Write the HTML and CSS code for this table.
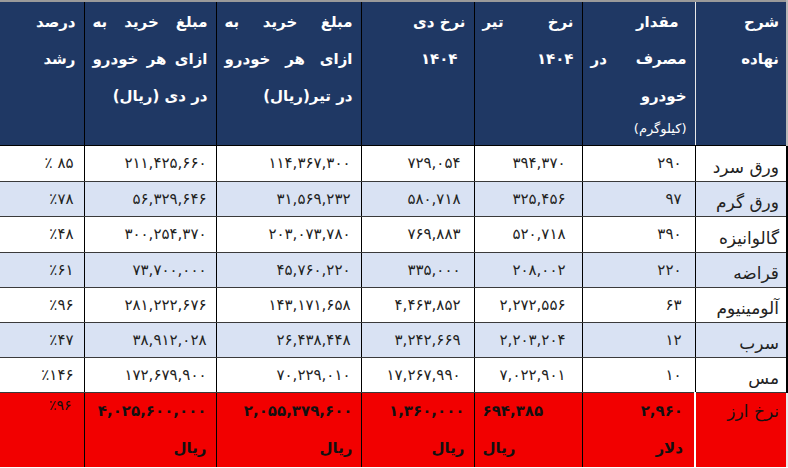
FILE: index.html
```html
<!DOCTYPE html>
<html lang="fa" dir="rtl">
<head>
<meta charset="utf-8">
<title>جدول نرخ مواد</title>
<link rel="stylesheet" href="styles.css">
</head>
<body>
<table class="grid">
  <colgroup>
    <col class="w1"><col class="w2"><col class="w3"><col class="w4"><col class="w5"><col class="w6"><col class="w7">
  </colgroup>
  <thead>
    <tr class="head">
      <th class="first"><span class="l">شرح</span><span class="l">نهاده</span></th>
      <th><span class="l ind">مقدار</span><span class="l j">مصرف در</span><span class="l">خودرو</span><span class="l small">(کیلوگرم)</span></th>
      <th><span class="l j">نرخ تیر</span><span class="l">۱۴۰۴</span></th>
      <th><span class="l">نرخ دی</span><span class="l ind">۱۴۰۴</span></th>
      <th><span class="l j">مبلغ خرید به</span><span class="l j">ازای هر خودرو</span><span class="l">در تیر(ریال)</span></th>
      <th><span class="l j">مبلغ خرید به</span><span class="l j">ازای هر خودرو</span><span class="l">در دی (ریال)</span></th>
      <th><span class="l">درصد</span><span class="l">رشد</span></th>
    </tr>
  </thead>
  <tbody>
    <tr class="r h36"><td class="first name">ورق سرد</td><td>۲۹۰</td><td>۳۹۴,۳۷۰</td><td>۷۲۹,۰۵۴</td><td>۱۱۴,۳۶۷,۳۰۰</td><td>۲۱۱,۴۲۵,۶۶۰</td><td>۸۵ ٪</td></tr>
    <tr class="r alt h35"><td class="first name">ورق گرم</td><td>۹۷</td><td>۳۲۵,۴۵۶</td><td>۵۸۰,۷۱۸</td><td>۳۱,۵۶۹,۲۳۲</td><td>۵۶,۳۲۹,۶۴۶</td><td>٪۷۸</td></tr>
    <tr class="r h36"><td class="first name">گالوانیزه</td><td>۳۹۰</td><td>۵۲۰,۷۱۸</td><td>۷۶۹,۸۸۳</td><td>۲۰۳,۰۷۳,۷۸۰</td><td>۳۰۰,۲۵۴,۳۷۰</td><td>٪۴۸</td></tr>
    <tr class="r alt h35"><td class="first name">قراضه</td><td>۲۲۰</td><td>۲۰۸,۰۰۲</td><td>۳۳۵,۰۰۰</td><td>۴۵,۷۶۰,۲۲۰</td><td>۷۳,۷۰۰,۰۰۰</td><td>٪۶۱</td></tr>
    <tr class="r h35"><td class="first name">آلومینیوم</td><td>۶۳</td><td>۲,۲۷۲,۵۵۶</td><td>۴,۴۶۳,۸۵۲</td><td>۱۴۳,۱۷۱,۶۵۸</td><td>۲۸۱,۲۲۲,۶۷۶</td><td>٪۹۶</td></tr>
    <tr class="r alt h35"><td class="first name">سرب</td><td>۱۲</td><td>۲,۲۰۳,۲۰۴</td><td>۳,۲۴۲,۶۶۹</td><td>۲۶,۴۳۸,۴۴۸</td><td>۳۸,۹۱۲,۰۲۸</td><td>٪۴۷</td></tr>
    <tr class="r h35"><td class="first name">مس</td><td>۱۰</td><td>۷,۰۲۲,۹۰۱</td><td>۱۷,۲۶۷,۹۹۰</td><td>۷۰,۲۲۹,۰۱۰</td><td>۱۷۲,۶۷۹,۹۰۰</td><td>٪۱۴۶</td></tr>
    <tr class="tot">
      <td class="first"><span class="l">نرخ ارز</span></td>
      <td><span class="l">۲,۹۶۰</span><span class="l">دلار</span></td>
      <td class="endal"><span class="l">۶۹۴,۳۸۵</span><span class="l">ریال</span></td>
      <td><span class="l">۱,۳۶۰,۰۰۰</span><span class="l">ریال</span></td>
      <td><span class="l">۲,۰۵۵,۳۷۹,۶۰۰</span><span class="l">ریال</span></td>
      <td><span class="l">۴,۰۲۵,۶۰۰,۰۰۰</span><span class="l">ریال</span></td>
      <td class="pct"><span class="l">٪۹۶</span></td>
    </tr>
  </tbody>
</table>
</body>
</html>
```

FILE: styles.css
```css
html, body {
  margin: 0;
  padding: 0;
  background: #ffffff;
}

body {
  font-family: "DejaVu Sans", sans-serif;
  color: #222222;
}

.grid {
  width: 788px;
  table-layout: fixed;
  border-collapse: collapse;
  border-top: 2px solid #9a9a9a;
}

.w1 { width: 92px; }
.w2 { width: 113px; }
.w3 { width: 108px; }
.w4 { width: 113px; }
.w5 { width: 145px; }
.w6 { width: 132px; }
.w7 { width: 85px; }

.l {
  display: block;
}

.j {
  text-align: justify;
  text-align-last: justify;
}

/* header */
.head th {
  box-sizing: border-box;
  height: 144px;
  background: #1f3864;
  color: #ffffff;
  font-weight: bold;
  font-size: 15px;
  line-height: 37px;
  text-align: right;
  vertical-align: top;
  padding: 2px 8px 0 8px;
  border-left: 1px solid #000000;
  border-bottom: 1px solid #000000;
  white-space: nowrap;
}

.head th.first {
  border-left: 1px solid #e8e8e8;
  border-right: 2px solid #b8b8b8;
  padding-right: 7px;
}

.head .ind {
  padding-right: 8px;
}

.head .small {
  font-weight: normal;
  font-size: 13px;
  line-height: 28px;
}

/* body rows */
.r td {
  box-sizing: border-box;
  background: #ffffff;
  font-size: 15px;
  line-height: 20px;
  text-align: right;
  vertical-align: middle;
  padding: 0 10px 0 4px;
  border-left: 1px solid #000000;
  border-bottom: 1px solid #3a3a3a;
  white-space: nowrap;
}

.r.alt td {
  background: #d9e2f3;
}

.h36 td { height: 36px; }
.h35 td { height: 35px; }

.r td.first {
  border-right: 2px solid #000000;
}

.r td.name {
  font-size: 17px;
  vertical-align: bottom;
  padding: 0 7px 4px 2px;
}

.r td:nth-child(2) { padding-right: 13px; }
.r td:nth-child(3) { padding-right: 16px; }
.r td:nth-child(4) { padding-right: 13px; }
.r td:nth-child(5) { padding-right: 10px; }
.r td:nth-child(6) { padding-right: 9px; }
.r td:nth-child(7) { padding-right: 10px; }

/* total row */
.tot td {
  box-sizing: border-box;
  height: 75px;
  background: #f20000;
  color: #111111;
  font-weight: bold;
  font-size: 15px;
  line-height: 37px;
  text-align: right;
  vertical-align: top;
  padding: 0 9px 0 8px;
  border-left: 1px solid #000000;
  white-space: nowrap;
}

.tot td.first {
  font-weight: normal;
  font-size: 17px;
  padding-right: 7px;
  border-left: 2px solid #ffffff;
  border-right: 2px solid #e8e8e8;
}

.tot td:nth-child(2) { padding-right: 11px; }
.tot td:nth-child(5) { padding-right: 8px; }

.tot td.endal {
  text-align: left;
}

.tot td.pct {
  font-weight: normal;
  font-size: 14px;
  line-height: 24px;
  padding-right: 12px;
}
```
